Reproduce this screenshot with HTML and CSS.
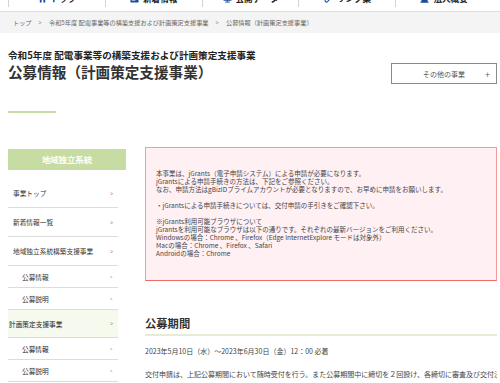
FILE: index.html
```html
<!DOCTYPE html>
<html lang="ja">
<head>
<meta charset="utf-8">
<title>公募情報（計画策定支援事業）</title>
<link rel="stylesheet" href="styles.css">
</head>
<body>
<nav class="gnav">
  <a class="gnav-item" href="#">
    <svg class="gicon" viewBox="0 0 10 10"><path d="M5 1 L0.5 5 H2 V9.5 H4 V6.5 H6 V9.5 H8 V5 H9.5 Z" fill="#1c4c9a"/></svg>
    <span>トップ</span>
  </a>
  <a class="gnav-item" href="#">
    <svg class="gicon" viewBox="0 0 10 10"><rect x="0.5" y="0.5" width="9" height="9" rx="1" fill="#1c4c9a"/><rect x="2" y="2" width="6" height="1.4" fill="#fff"/><rect x="2" y="4.3" width="6" height="1" fill="#fff"/><rect x="2" y="6.3" width="4" height="1" fill="#fff"/></svg>
    <span>新着情報</span>
  </a>
  <a class="gnav-item" href="#">
    <svg class="gicon" viewBox="0 0 10 10"><rect x="0.8" y="0.8" width="8.4" height="6" rx="0.6" fill="none" stroke="#1c4c9a" stroke-width="1.2"/><rect x="4.3" y="6.8" width="1.4" height="1.6" fill="#1c4c9a"/><rect x="2.5" y="8.4" width="5" height="1.1" fill="#1c4c9a"/></svg>
    <span>公開データ</span>
  </a>
  <a class="gnav-item" href="#">
    <svg class="gicon" viewBox="0 0 10 10"><path d="M4.2 5.8 L5.8 4.2" stroke="#1c4c9a" stroke-width="1.2"/><rect x="5" y="0.8" width="3.2" height="5" rx="1.6" transform="rotate(45 6.6 3.3)" fill="none" stroke="#1c4c9a" stroke-width="1.2"/><rect x="1.8" y="4.2" width="3.2" height="5" rx="1.6" transform="rotate(45 3.4 6.7)" fill="none" stroke="#1c4c9a" stroke-width="1.2"/></svg>
    <span>リンク集</span>
  </a>
  <a class="gnav-item" href="#">
    <svg class="gicon" viewBox="0 0 10 10"><rect x="1.5" y="0.5" width="7" height="8.5" fill="#1c4c9a"/><rect x="0.5" y="8.5" width="9" height="1.2" fill="#1c4c9a"/><rect x="3" y="2" width="1.2" height="1.2" fill="#fff"/><rect x="5.8" y="2" width="1.2" height="1.2" fill="#fff"/><rect x="3" y="4.3" width="1.2" height="1.2" fill="#fff"/><rect x="5.8" y="4.3" width="1.2" height="1.2" fill="#fff"/></svg>
    <span>法人概要</span>
  </a>
</nav>

<div class="breadcrumb">
  <a href="#">トップ</a><span class="sep">&gt;</span><a href="#">令和5年度 配電事業等の構築支援および計画策定支援事業</a><span class="sep">&gt;</span><span>公募情報（計画策定支援事業）</span>
</div>

<div class="wrap">
  <header class="page-head">
    <div class="titles">
      <p class="subtitle">令和5年度 配電事業等の構築支援および計画策定支援事業</p>
      <h1 class="title">公募情報（計画策定支援事業）</h1>
      <div class="title-line"></div>
    </div>
    <button class="other-btn" type="button"><span>その他の事業</span><span class="plus">+</span></button>
  </header>

  <div class="content">
    <aside class="side">
      <div class="side-head">地域独立系統</div>
      <ul class="side-menu">
        <li class="mi first"><span>事業トップ</span><span class="chev">&gt;</span></li>
        <li class="mi"><span>新着情報一覧</span><span class="chev">&gt;</span></li>
        <li class="mi"><span>地域独立系統構築支援事業</span><span class="chev">&gt;</span></li>
        <li class="mi sub"><span>公募情報</span><span class="chev">&gt;</span></li>
        <li class="mi sub"><span>公募説明</span><span class="chev">&gt;</span></li>
        <li class="mi current"><span>計画策定支援事業</span><span class="chev">&gt;</span></li>
        <li class="mi sub strong"><span>公募情報</span><span class="chev">&gt;</span></li>
        <li class="mi sub"><span>公募説明</span><span class="chev">&gt;</span></li>
      </ul>
    </aside>

    <main class="main">
      <div class="notice">
        <p class="np">本事業は、jGrants（電子申請システム）による申請が必要になります。<br>jGrantsによる申請手続きの方法は、下記をご参照ください。<br>なお、申請方法はgBizIDプライムアカウントが必要となりますので、お早めに申請をお願いします。</p>
        <p class="np">・jGrantsによる申請手続きについては、交付申請の手引きをご確認下さい。</p>
        <p class="np">※jGrants利用可能ブラウザについて<br>jGrantsを利用可能なブラウザは以下の通りです。それぞれの最新バージョンをご利用ください。<br>Windowsの場合：Chrome 、Firefox（Edge InternetExplore モードは対象外）<br>Macの場合：Chrome 、Firefox 、Safari<br>Androidの場合：Chrome</p>
      </div>

      <h2 class="sec-title">公募期間</h2>
      <p class="date">2023年5月10日（水）～2023年6月30日（金）12：00 必着</p>
      <p class="para">交付申請は、上記公募期間において随時受付を行う。また公募期間中に締切を２回設け、各締切に審査及び交付決定を行う。</p>
    </main>
  </div>
</div>
</body>
</html>
```

FILE: styles.css
```css
* { box-sizing: border-box; }
html, body { margin: 0; padding: 0; }
html { overflow: hidden; }
body {
  font-family: "Noto Sans CJK JP", "Noto Sans", sans-serif;
  color: #333;
  background: #fff;
  width: 500px;
  overflow: hidden;
}
a { color: inherit; text-decoration: none; }
p, h1, h2, ul { margin: 0; padding: 0; }

/* global nav (scrolled, only bottom visible) */
.gnav {
  display: flex;
  margin-top: -11px;
  padding: 0 8px 4px;
  border-bottom: 1px solid #dedede;
}
.gnav-item {
  width: 98px;
  height: 18px;
  border-left: 1px solid #d4d4d4;
  display: flex;
  align-items: center;
  justify-content: center;
  gap: 4px;
  font-size: 8.6px;
  font-weight: 700;
  color: #222;
  line-height: 1;
}
.gicon { width: 9px; height: 9px; flex: none; }

/* breadcrumb */
.breadcrumb {
  height: 21px;
  line-height: 21px;
  background: #f4f4f4;
  padding-left: 13px;
  font-size: 6.2px;
  color: #666;
  white-space: nowrap;
}
.breadcrumb .sep { margin: 0 7px; }

.wrap { padding: 0 3px 0 8px; }

/* page head */
.page-head {
  display: flex;
  justify-content: space-between;
  align-items: flex-start;
  padding-top: 16px;
}
.subtitle {
  font-size: 9.6px;
  font-weight: 700;
  line-height: 12px;
  color: #222;
}
.title {
  margin-top: 2px;
  font-size: 14.6px;
  font-weight: 700;
  line-height: 18px;
  color: #333;
}
.title-line {
  margin-top: 30px;
  width: 48px;
  height: 2px;
  background: #c8dca6;
}
.other-btn {
  margin-top: 14px;
  width: 106px;
  height: 21px;
  border: 1px solid #8a8a8a;
  background: #fff;
  font-family: inherit;
  font-size: 7px;
  color: #555;
  display: flex;
  align-items: center;
  justify-content: center;
  position: relative;
  padding: 0;
}
.other-btn .plus {
  position: absolute;
  right: 6px;
  top: 50%;
  transform: translateY(-50%);
  font-size: 9px;
  color: #666;
}

/* content */
.content {
  display: flex;
  gap: 19px;
  margin-top: 34px;
  align-items: flex-start;
}
.side { width: 118px; flex: none; margin-top: 2px; }
.side-head {
  height: 21px;
  line-height: 21px;
  background: #c6dca3;
  color: #fff;
  font-weight: 700;
  font-size: 8.4px;
  text-align: center;
}
.side-menu { list-style: none; width: 110px; }
.mi {
  display: flex;
  justify-content: space-between;
  align-items: center;
  height: 29px;
  border-bottom: 1px solid #dcdcdc;
  padding: 0 5px 0 5px;
  font-size: 6.7px;
  color: #333;
}
.mi.first { margin-top: 9px; }
.mi.sub { height: 22px; padding-left: 14px; }
.mi.current { height: 28px; background: #f5f9ee; padding-left: 1px; color: #222; }
.mi.strong { color: #222; }
.chev { font-size: 6px; color: #777; transform: scaleX(0.8); }
.mi.sub .chev { font-size: 5px; }

/* main */
.main { flex: 1; min-width: 0; overflow: hidden; }
.notice {
  height: 134px;
  border: 1px solid #f29b9b;
  border-bottom-color: #f06a6a;
  background: #fff0f3;
  padding: 21px 6px 0 10px;
  overflow: hidden;
  font-size: 6.5px;
  line-height: 8px;
  color: #444;
  white-space: nowrap;
}
.np + .np { margin-top: 8px; }

.sec-title {
  margin-top: 35px;
  font-size: 11.3px;
  line-height: 14px;
  font-weight: 700;
  color: #333;
  padding-bottom: 4px;
  border-bottom: 2px solid #e4ecd3;
}
.date {
  margin-top: 10px;
  font-size: 7px;
  line-height: 10px;
  color: #444;
}
.para {
  margin-top: 13px;
  font-size: 7px;
  line-height: 10px;
  color: #444;
  white-space: nowrap;
}
```
